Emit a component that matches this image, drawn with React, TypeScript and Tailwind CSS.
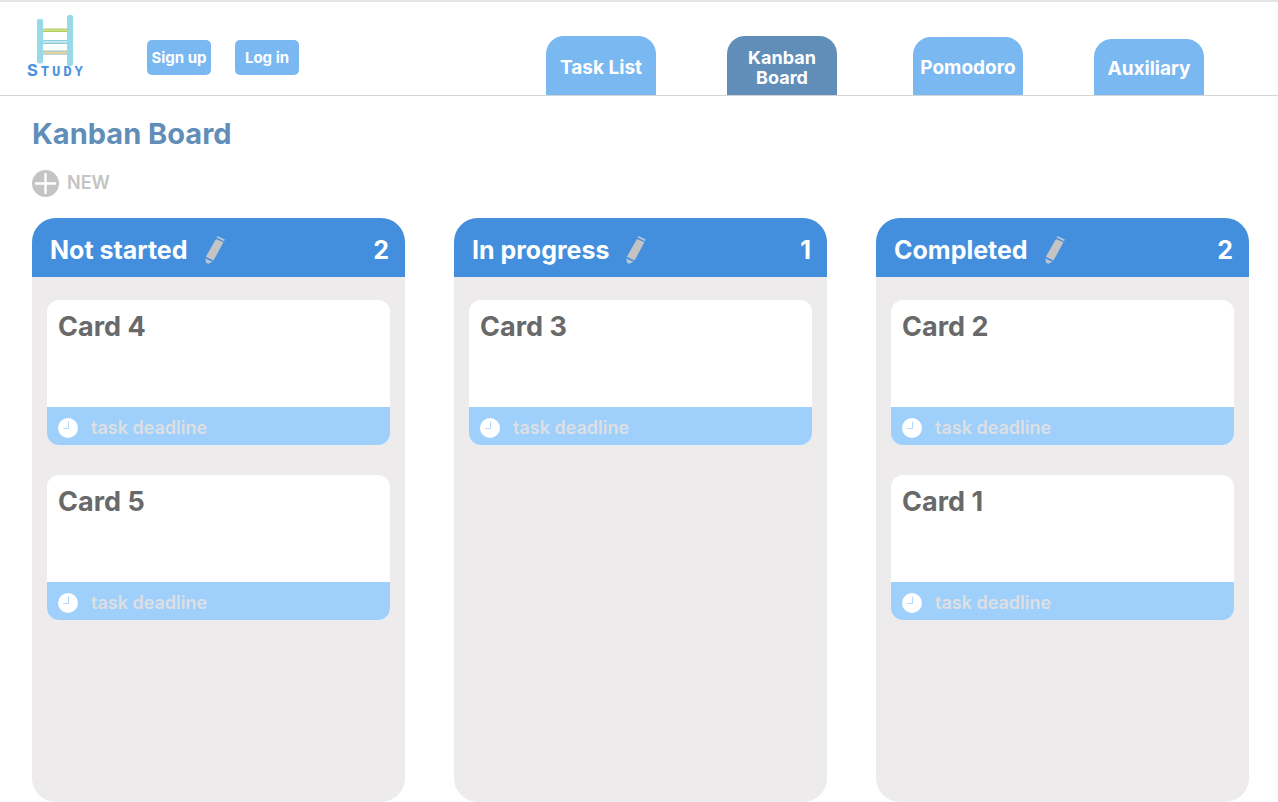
type Tab = { label: string; active?: boolean; height: string };
type Column = { title: string; cards: string[] };

const tabGroups: Tab[][] = [
  [
    { label: "Task List", height: "h-[59px]" },
    { label: "Kanban Board", active: true, height: "h-[59px]" },
  ],
  [
    { label: "Pomodoro", height: "h-[58px]" },
    { label: "Auxiliary", height: "h-[56px]" },
  ],
];

const columns: Column[] = [
  { title: "Not started", cards: ["Card 4", "Card 5"] },
  { title: "In progress", cards: ["Card 3"] },
  { title: "Completed", cards: ["Card 2", "Card 1"] },
];

function Logo() {
  return (
    <a href="#" aria-label="Study" className="flex w-14 flex-col items-center">
      <svg width="38" height="52" viewBox="0 0 38 52" aria-hidden="true">
        <rect x="6" y="13.6" width="26" height="3.4" fill="#a9cf62" />
        <rect x="6" y="14.8" width="26" height="1" fill="#e9e58a" />
        <rect x="6" y="25" width="26" height="3.6" fill="#c9e8ee" />
        <rect x="6" y="25" width="26" height="1" fill="#8fd0df" />
        <rect x="6" y="27.8" width="26" height="1" fill="#7cc0d4" />
        <rect x="6" y="35.8" width="26" height="3.6" fill="#ecd1a0" />
        <rect x="6" y="35.6" width="26" height="1" fill="#8fcbd6" />
        <rect x="6" y="38.8" width="26" height="1" fill="#a9cfcf" />
        <rect x="1" y="4" width="6" height="44.5" rx="2" fill="#97d9e8" />
        <rect x="31" y="0" width="6" height="51" rx="2" fill="#97d9e8" />
      </svg>
      <span className="-mt-1 flex h-4 w-full items-baseline justify-between font-['Liberation_Mono',monospace] text-sm leading-4 font-bold text-[#4a90e2]">
        <span className="text-lg leading-4">S</span>
        <span>T</span>
        <span>U</span>
        <span>D</span>
        <span>Y</span>
      </span>
    </a>
  );
}

function Pencil() {
  return (
    <svg width="22" height="30" viewBox="0 0 22 30" aria-hidden="true">
      <path d="M13.4 0 20.8 3.4 20 5.2 12.6 1.6Z" fill="#b3c9d8" />
      <path d="M12 2.9 19.4 6.3 9.5 24.6 1.8 20.8Z" fill="#c4c4c4" />
      <path d="M1.2 22.4 8.4 25.8 4.4 27.8 2 26.8Z" fill="#bac8d1" />
    </svg>
  );
}

function Clock() {
  return (
    <svg width="20" height="20" viewBox="0 0 20 20" aria-hidden="true">
      <circle cx="10" cy="10" r="10" fill="#fff" />
      <path d="M10.5 3.5V10.5H5" fill="none" stroke="#b4d9fb" strokeWidth="1" />
    </svg>
  );
}

function Card({ title }: { title: string }) {
  return (
    <article className="overflow-hidden rounded-xl bg-white">
      <h3 className="h-[107px] px-[11px] pt-[11px] text-[27px] leading-8 font-bold text-[#696969]">
        {title}
      </h3>
      <p className="flex h-[38px] items-center gap-[13px] bg-[#9fd0fc] pt-1 pl-[11px] text-lg font-semibold text-[#dedfe3]">
        <Clock />
        task deadline
      </p>
    </article>
  );
}

export default function App() {
  return (
    <div className="flex min-h-screen flex-col bg-white font-['Inter',sans-serif]">
      <header className="flex h-24 items-end justify-between border-t-2 border-b border-t-[#e5e5e5] border-b-[#d4d4d4] pr-[74px] pl-[27px]">
        <div className="flex items-start gap-16 self-start pt-[13px]">
          <Logo />
          <div className="flex gap-6 pt-[25px]">
            {["Sign up", "Log in"].map((label) => (
              <button
                key={label}
                type="button"
                className="h-[35px] w-16 rounded-[5px] bg-[#7ab8f2] pt-0.5 text-[15px] font-bold whitespace-nowrap text-white"
              >
                {label}
              </button>
            ))}
          </div>
        </div>
        <nav className="flex gap-[76px]" aria-label="Main">
          {tabGroups.map((group) => (
            <div key={group[0].label} className="flex items-end gap-[71px]">
              {group.map((tab) => (
                <a
                  key={tab.label}
                  href="#"
                  aria-current={tab.active ? "page" : undefined}
                  className={`flex w-[110px] items-center justify-center rounded-t-[18px] pt-1 text-center leading-5 font-bold text-white ${tab.height} ${
                    tab.active ? "bg-[#618eb8] px-4 text-lg" : "bg-[#7ab8f2] text-[19px]"
                  }`}
                >
                  {tab.label}
                </a>
              ))}
            </div>
          ))}
        </nav>
      </header>

      <main className="flex flex-1 flex-col pr-[29px] pl-8">
        <h1 className="mt-5 text-[29px] leading-9 font-bold text-[#618eb8]">Kanban Board</h1>
        <button
          type="button"
          className="mt-[17px] flex h-7 items-center gap-2 self-start text-lg font-semibold text-[#c4c4c4]"
        >
          <svg width="27" height="27" viewBox="0 0 27 27" aria-hidden="true">
            <circle cx="13.5" cy="13.5" r="13.5" fill="#c4c4c4" />
            <path d="M13.5 4V23M4 13.5H23" stroke="#fff" strokeWidth="2.4" strokeLinecap="round" />
          </svg>
          NEW
        </button>

        <div className="mt-[21px] grid flex-1 grid-cols-3 gap-[49px]">
          {columns.map((column) => (
            <section key={column.title} className="overflow-hidden rounded-3xl bg-[#edebec]">
              <header className="flex h-[59px] items-center bg-[#448fdd] pt-1.5 pr-4 pl-[18px] text-[25px] font-bold text-white">
                <h2>{column.title}</h2>
                <button type="button" aria-label={`Rename ${column.title}`} className="ml-4">
                  <Pencil />
                </button>
                <span className="ml-auto">{column.cards.length}</span>
              </header>
              <div className="flex flex-col gap-[30px] px-[15px] pt-[23px] pb-6">
                {column.cards.map((title) => (
                  <Card key={title} title={title} />
                ))}
              </div>
            </section>
          ))}
        </div>
      </main>
    </div>
  );
}
